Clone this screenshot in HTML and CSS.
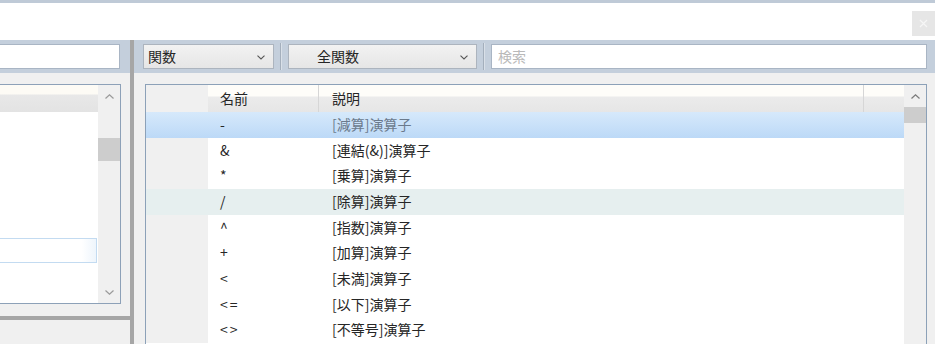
FILE: index.html
```html
<!DOCTYPE html>
<html lang="ja">
<head>
<meta charset="utf-8">
<title>関数</title>
<link rel="stylesheet" href="styles.css">
</head>
<body>
<div class="app">
  <div class="topband"></div>
  <div class="topbar">
    <div class="close-btn"><svg width="9" height="9" viewBox="0 0 9 9"><path d="M1 1L8 8M8 1L1 8" stroke="#f6f6f6" stroke-width="1.2"/></svg></div>
  </div>
  <div class="main">
    <div class="left">
      <div class="toolbar left-toolbar">
        <div class="field left-field"></div>
      </div>
      <div class="left-body">
        <div class="llist">
          <div class="llist-content">
            <div class="lhead"></div>
            <div class="lrows">
              <div class="ledit"></div>
            </div>
          </div>
          <div class="scrollbar lscroll">
            <div class="sarrow"><svg width="9" height="5" viewBox="0 0 9 5"><path d="M0.5 4.5L4.5 0.8L8.5 4.5" fill="none" stroke="#9a9a9a" stroke-width="1.2"/></svg></div>
            <div class="strack ltrack"><div class="lthumb"></div></div>
            <div class="sarrow"><svg width="9" height="5" viewBox="0 0 9 5"><path d="M0.5 0.5L4.5 4.2L8.5 0.5" fill="none" stroke="#9a9a9a" stroke-width="1.2"/></svg></div>
          </div>
        </div>
        <div class="hsplit"></div>
      </div>
    </div>
    <div class="vsplit"></div>
    <div class="right">
      <div class="toolbar right-toolbar">
        <div class="combo combo-cat"><span class="combo-text">関数</span><svg class="chev" width="8" height="5" viewBox="0 0 8 5"><path d="M0.5 0.7L4 4L7.5 0.7" fill="none" stroke="#555" stroke-width="1.1"/></svg></div>
        <div class="sep"></div>
        <div class="combo combo-all"><span class="combo-text">全関数</span><svg class="chev" width="8" height="5" viewBox="0 0 8 5"><path d="M0.5 0.7L4 4L7.5 0.7" fill="none" stroke="#555" stroke-width="1.1"/></svg></div>
        <div class="sep"></div>
        <div class="field search"><span class="placeholder">検索</span></div>
      </div>
      <div class="right-body">
        <div class="grid">
          <div class="grid-content">
            <div class="ghead">
              <div class="c-rh"></div>
              <div class="c-name hcell">名前</div>
              <div class="c-desc hcell">説明</div>
              <div class="c-fill hcell"></div>
            </div>
            <div class="grow selected"><div class="c-rh"></div><div class="c-name">-</div><div class="c-desc">[減算]演算子</div><div class="c-fill"></div></div>
            <div class="grow"><div class="c-rh"></div><div class="c-name">&amp;</div><div class="c-desc">[連結(&amp;)]演算子</div><div class="c-fill"></div></div>
            <div class="grow"><div class="c-rh"></div><div class="c-name">*</div><div class="c-desc">[乗算]演算子</div><div class="c-fill"></div></div>
            <div class="grow hover"><div class="c-rh"></div><div class="c-name">/</div><div class="c-desc">[除算]演算子</div><div class="c-fill"></div></div>
            <div class="grow"><div class="c-rh"></div><div class="c-name">^</div><div class="c-desc">[指数]演算子</div><div class="c-fill"></div></div>
            <div class="grow"><div class="c-rh"></div><div class="c-name">+</div><div class="c-desc">[加算]演算子</div><div class="c-fill"></div></div>
            <div class="grow"><div class="c-rh"></div><div class="c-name">&lt;</div><div class="c-desc">[未満]演算子</div><div class="c-fill"></div></div>
            <div class="grow"><div class="c-rh"></div><div class="c-name">&lt;=</div><div class="c-desc">[以下]演算子</div><div class="c-fill"></div></div>
            <div class="grow"><div class="c-rh"></div><div class="c-name">&lt;&gt;</div><div class="c-desc">[不等号]演算子</div><div class="c-fill"></div></div>
          </div>
          <div class="scrollbar rscroll">
            <div class="sarrow"><svg width="9" height="5" viewBox="0 0 9 5"><path d="M0.5 4.5L4.5 0.8L8.5 4.5" fill="none" stroke="#7a7a7a" stroke-width="1.2"/></svg></div>
            <div class="strack"><div class="rthumb"></div></div>
          </div>
        </div>
      </div>
    </div>
  </div>
</div>
</body>
</html>
```

FILE: styles.css
```css
* { box-sizing: border-box; }
html, body { margin: 0; padding: 0; }
body {
  width: 935px;
  height: 344px;
  overflow: hidden;
  font-family: "Noto Sans CJK JP", "Noto Sans", sans-serif;
  font-size: 14px;
  color: #262626;
  background: #ffffff;
}
.app { width: 935px; height: 344px; display: flex; flex-direction: column; }
.topband { height: 3px; background: #bfcad7; }
.topbar {
  height: 37px;
  background: #ffffff;
  display: flex;
  justify-content: flex-end;
  padding-top: 8px;
}
.close-btn {
  width: 23px;
  height: 25px;
  background: #e6e6e6;
  display: flex;
  align-items: center;
  justify-content: center;
}
.main { flex: 1; display: flex; min-height: 0; }
.left { width: 130px; display: flex; flex-direction: column; }
.vsplit { width: 4px; background: #a6a6a6; }
.right { flex: 1; display: flex; flex-direction: column; min-width: 0; }

.toolbar {
  height: 33px;
  background: #c4cfdc;
  display: flex;
  align-items: flex-start;
  padding-top: 4px;
}
.field {
  height: 25px;
  background: #ffffff;
  border: 1px solid #a9b5c4;
}
.left-field { width: 120px; border-left: none; }

.left-body {
  flex: 1;
  background: #f0f0f0;
  padding-top: 11px;
  display: flex;
  flex-direction: column;
}
.llist {
  width: 121px;
  height: 220px;
  border: 1px solid #8da1b8;
  border-left: none;
  background: #ffffff;
  display: flex;
}
.llist-content { flex: 1; display: flex; flex-direction: column; }
.lhead {
  height: 27px;
  background: linear-gradient(#fdfbf5 0, #fdfbf5 9px, #e8e8e8 10px, #e3e3e3 100%);
}
.lrows { flex: 1; position: relative; background: #ffffff; }
.ledit {
  position: absolute;
  left: 0;
  top: 126px;
  width: 97px;
  height: 25px;
  border: 1px solid #c3dbf1;
  border-left: none;
  background: linear-gradient(90deg, #ffffff 85%, #eef5fc 100%);
}
.scrollbar {
  width: 22px;
  background: #f0f0f0;
  display: flex;
  flex-direction: column;
}
.sarrow {
  height: 22px;
  display: flex;
  align-items: center;
  justify-content: center;
}
.strack { flex: 1; position: relative; }
.lthumb {
  position: absolute;
  left: 0; right: 0;
  top: 31px;
  height: 23px;
  background: #cdcdcd;
}
.hsplit {
  margin-top: 12px;
  height: 4px;
  background: #a6a6a6;
}

.right-toolbar { padding-left: 9px; padding-right: 8px; }
.combo {
  height: 25px;
  border: 1px solid #acb4be;
  background: linear-gradient(#f2f2f2, #e6e6e6);
  display: flex;
  align-items: center;
  justify-content: space-between;
  padding: 0 8px 0 4px;
}
.combo-text { line-height: 23px; }
.combo-cat { width: 131px; }
.combo-all { width: 189px; padding-left: 28px; }
.chev { margin-top: 1px; }
.sep {
  width: 2px;
  height: 27px;
  margin: -1px 6px 0 6px;
  border-left: 1px solid #a4afbc;
  border-right: 1px solid #d9e0e8;
}
.search { flex: 1; padding-left: 6px; display: flex; align-items: center; }
.placeholder { color: #b9b9b9; line-height: 23px; }

.right-body {
  flex: 1;
  background: #f0f0f0;
  padding: 11px 8px 0 11px;
  min-height: 0;
}
.grid {
  height: 100%;
  border: 1px solid #8ca1b8;
  border-bottom: none;
  background: #ffffff;
  display: flex;
  overflow: hidden;
}
.grid-content { flex: 1; display: flex; flex-direction: column; }
.ghead { height: 27px; display: flex; }
.ghead .c-rh { background: #f0f0f0; }
.hcell {
  background: linear-gradient(#fefdf9 0, #fefdf9 11px, #ebebeb 12px, #e6e6e6 100%);
  line-height: 27px;
  border-right: 1px solid #d6d6d6;
}
.ghead .c-name { padding-left: 12px; letter-spacing: 0; }
.ghead .c-desc { padding-left: 13px; }
.c-rh { width: 62px; flex: none; }
.c-name { width: 111px; flex: none; padding-left: 12px; }
.grow .c-name { letter-spacing: 2px; }
.c-desc { width: 545px; flex: none; padding-left: 13px; }
.c-fill { flex: 1; border-right: none; }
.grow {
  height: 25.67px;
  display: flex;
  line-height: 24px;
  background: #ffffff;
}
.grow .c-rh { background: #f0f0f0; }
.grow.selected { background: linear-gradient(#d6e9fb, #bcd9f7); }
.grow.selected .c-rh { background: transparent; }
.grow.selected .c-desc { color: #6b7a8c; }
.grow.hover { background: #e6efef; }
.grow.hover .c-rh { background: transparent; }
.rscroll { width: 22px; }
.rscroll .sarrow { height: 22px; }
.rthumb {
  position: absolute;
  left: 0; right: 0;
  top: 0;
  height: 16px;
  background: #cdcdcd;
}
```
